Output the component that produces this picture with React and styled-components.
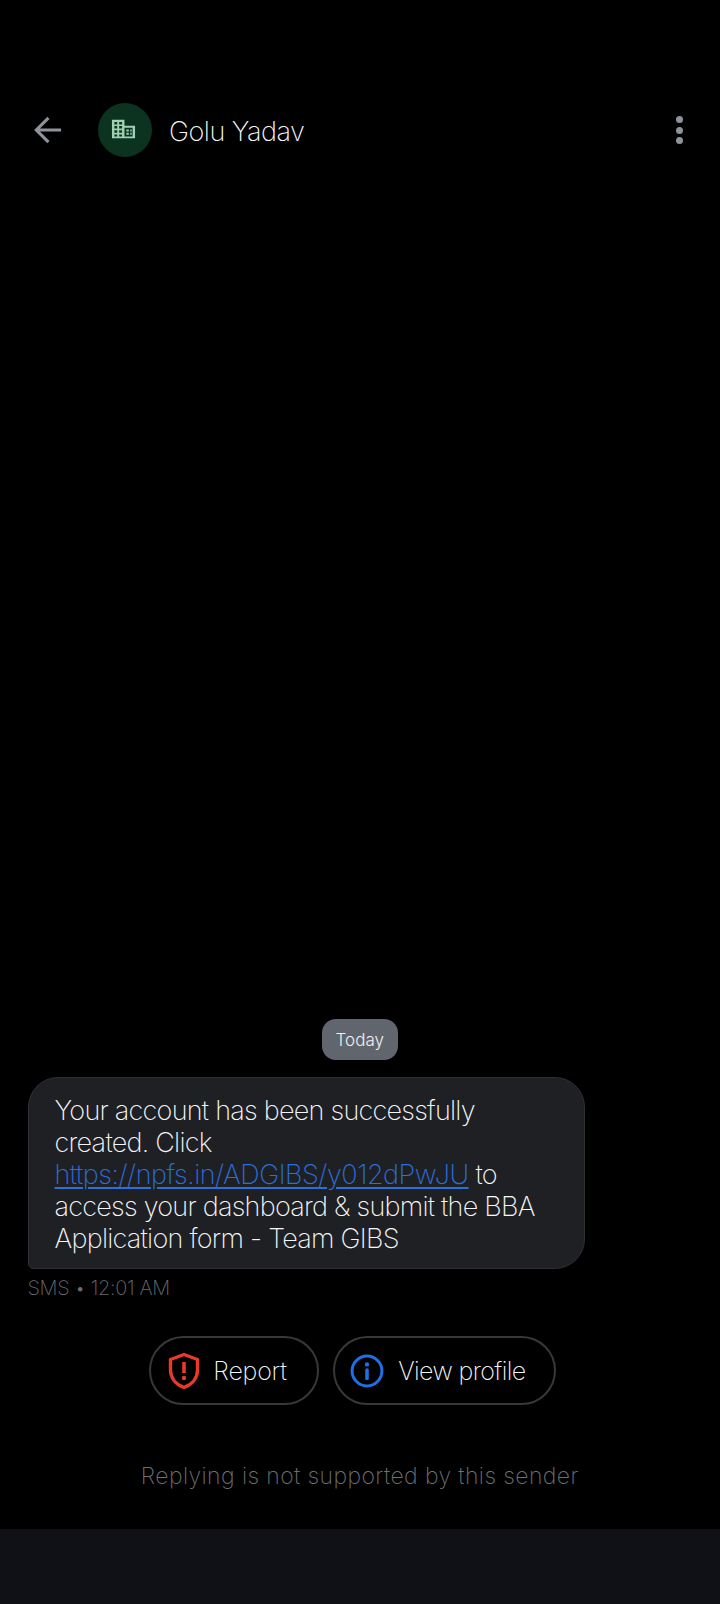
import React from "react";
import styled, { createGlobalStyle } from "styled-components";

const Global = createGlobalStyle`
  html, body { margin: 0; padding: 0; background: #000; }
  body { font-family: Inter, "Liberation Sans", sans-serif; font-weight: 200; }
`;

const Screen = styled.div`
  width: 720px; height: 1604px; background: #000; display: flex; flex-direction: column; overflow: hidden;
`;
const Header = styled.header`
  display: flex; align-items: center; height: 54px; margin-top: 103px; padding: 0 37px 0 33px;
`;
const BackButton = styled.div`
  width: 30px; height: 30px; display: flex; align-items: center; justify-content: center; margin-right: 35px;
`;
const Avatar = styled.div`
  width: 54px; height: 54px; box-sizing: border-box; padding: 0 3px 3px 0; border-radius: 50%; background: #0b3320; display: flex; align-items: center; justify-content: center; margin-right: 17px;
`;
const Name = styled.h1`
  flex: 1; margin: 0; padding-top: 2px; font-size: 27px; font-weight: 200; color: #f6f7f7; letter-spacing: -0.5px;
`;
const MenuButton = styled.div`
  display: flex; flex-direction: column; gap: 3.5px;
`;
const Dot = styled.span`
  width: 7px; height: 7px; border-radius: 50%; background: #8e9299;
`;
const Thread = styled.main`
  flex: 1; display: flex; flex-direction: column; justify-content: flex-end; padding: 0 28px 0 27.5px;
`;
const DatePill = styled.div`
  align-self: center; width: 76px; height: 41px; border-radius: 14px; background: #61656e; color: #f0f0f2; font-size: 17px; font-weight: 300;
  display: flex; align-items: center; justify-content: center; margin-bottom: 17px;
`;
const Bubble = styled.div`
  width: 557px; box-sizing: border-box; height: 192px; padding: 17px 26px 0 26px; background: #1f2024; border: 1.5px solid #2e3034;
  border-radius: 30px 30px 30px 5px; font-size: 27px; font-weight: 200; line-height: 32px; color: #f6f7f8; letter-spacing: -0.75px;
`;
const Link = styled.a`
  color: #2a6fdc; letter-spacing: -0.48px; text-decoration: underline; text-underline-offset: 3px; text-decoration-thickness: 1.5px;
`;
const Meta = styled.div`
  margin-top: 6px; font-size: 20px; font-weight: 200; line-height: 26px; color: #6a6c70; letter-spacing: -0.35px;
`;
const Actions = styled.div`
  display: flex; justify-content: center; gap: 14px; margin-top: 35px; padding-right: 14px;
`;
const ActionButton = styled.button`
  width: ${p => p.$width}px; height: 69px; box-sizing: border-box; border: 2px solid #37383b; border-radius: 35px; background: transparent; color: #f4f5f6;
  display: flex; align-items: center; gap: ${p => p.$gap}px; padding: 0 0 0 ${p => p.$pad}px; font: 200 25px Inter, "Liberation Sans", sans-serif; letter-spacing: ${p => p.$tracking}px;
`;
const Notice = styled.div`
  margin-top: 55px; height: 69px; text-align: center; font-size: 23px; font-weight: 200; line-height: 32px; color: #6d6f73; letter-spacing: 0.4px;
`;
const Footer = styled.footer`
  height: 75px; background: #0f1116;
`;

const Back = () => (
  <svg width="28" height="28" viewBox="0 0 30 30" fill="none" stroke="#8e9299" strokeWidth="3.4"><path d="M29 15H3M15.500 2 2.500 15l13 13" /></svg>
);
const Building = () => (
  <svg width="25" height="20" viewBox="0 0 26 24" preserveAspectRatio="none" fill="#9fd0b4">
    <path fillRule="evenodd" d="M1 1h13v7h11v15H1ZM3.500 3.500v3h3v-3Zm5 0v3h3v-3Zm-5 5v3h3v-3Zm5 0v3h3v-3Zm-5 5v3h3v-3Zm5 0v3h3v-3Zm-5 5v2.500h3V18.500Zm5 0v2.500h3V18.500ZM14 10.500V21h8.500V10.500Z" />
    <path d="M16 12.500h2.500v2.500H16ZM16 16.500h2.500V19H16ZM20 12.500h1.500v2.500H20ZM20 16.500h1.500V19H20Z" />
  </svg>
);
const Shield = () => (
  <svg width="34" height="38" viewBox="0 0 34 38" fill="none"><path d="M17 2.500 30.500 7.500V18c0 8-5.500 14.500-13.500 17.500C9 32.500 3.500 26 3.500 18V7.500Z" stroke="#e8392b" strokeWidth="3.400" strokeLinejoin="round" /><path d="M17 10v11" stroke="#e8392b" strokeWidth="3.600" /><circle cx="17" cy="26" r="2.200" fill="#e8392b" /></svg>
);
const Info = () => (
  <svg width="34" height="34" viewBox="0 0 36 36" fill="none"><circle cx="18" cy="18" r="15.800" stroke="#1f6fe5" strokeWidth="3.200" /><path d="M18 17v9" stroke="#1f6fe5" strokeWidth="3.800" strokeLinecap="round" /><circle cx="18" cy="11" r="2.300" fill="#1f6fe5" /></svg>
);

export default function App() {
  return (
    <Screen>
      <Global />
      <Header>
        <BackButton><Back /></BackButton>
        <Avatar><Building /></Avatar>
        <Name>Golu Yadav</Name>
        <MenuButton><Dot /><Dot /><Dot /></MenuButton>
      </Header>
      <Thread>
        <DatePill>Today</DatePill>
        <Bubble>
          Your account has been successfully<br />created. Click<br />
          <Link>https://npfs.in/ADGIBS/y012dPwJU</Link> to<br />
          access your dashboard &amp; submit the BBA<br />Application form - Team GIBS
        </Bubble>
        <Meta>SMS • 12:01 AM</Meta>
        <Actions>
          <ActionButton $width={170} $gap={12} $pad={16} $tracking={-0.2}><Shield />Report</ActionButton>
          <ActionButton $width={223} $gap={14} $pad={15} $tracking={-0.6}><Info />View profile</ActionButton>
        </Actions>
        <Notice>Replying is not supported by this sender</Notice>
      </Thread>
      <Footer />
    </Screen>
  );
}
